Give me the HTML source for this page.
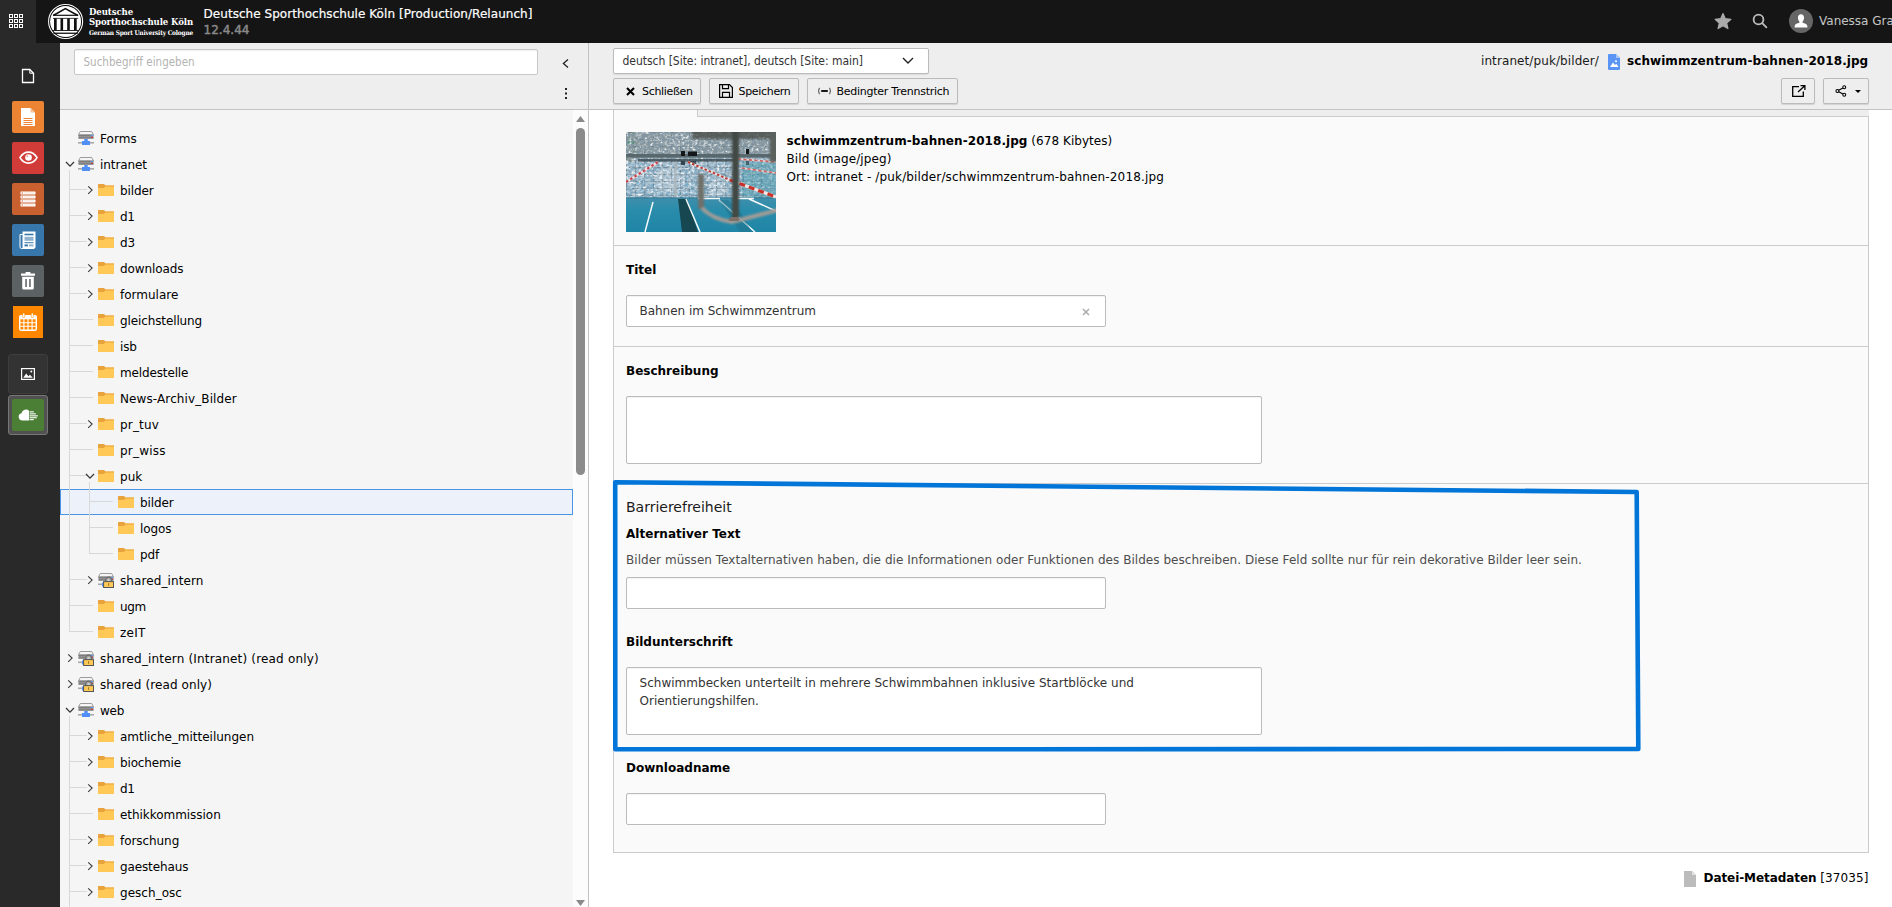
<!DOCTYPE html>
<html lang="de">
<head>
<meta charset="utf-8">
<title>Deutsche Sporthochschule Köln [Production/Relaunch] · TYPO3</title>
<style>
*{box-sizing:border-box;margin:0;padding:0}
html,body{width:1892px;height:907px;overflow:hidden;background:#fff}
body{font-family:"DejaVu Sans","Liberation Sans",sans-serif;font-size:12px;color:#1a1a1a;position:relative}
.abs{position:absolute}
svg{display:block}
/* ---- top bar ---- */
#topbar{position:absolute;left:0;top:0;width:1892px;height:43px;background:#151515;color:#fff}
#topbar .toggle{position:absolute;left:0;top:0;width:36px;height:43px;background:#292929}
#topbar .site{position:absolute;left:203.5px;top:7px;font-size:12px;line-height:14px;white-space:nowrap;color:#fff;-webkit-text-stroke:.2px #fff}
#topbar .ver{position:absolute;left:203.5px;top:22.5px;font-size:12px;line-height:14px;white-space:nowrap;color:#8a8a8a;-webkit-text-stroke:.45px #8a8a8a}
#topbar .logo-t{position:absolute;left:89px;white-space:nowrap;color:#fff;font-family:"DejaVu Serif Condensed","DejaVu Serif","Liberation Serif",serif;font-weight:bold}
#topbar .user{position:absolute;left:1819px;top:14px;font-size:12px;line-height:14px;white-space:nowrap;color:#c6c6c6}
/* ---- module menu ---- */
#modmenu{position:absolute;left:0;top:43px;width:60px;height:864px;background:#292929}
#modmenu .m{position:absolute;left:12px;width:32px;height:32px;border-radius:2px}
#modmenu .box{position:absolute;left:8px;width:40px;height:40px;border-radius:3px;border:1px solid #3d3d3d;background:#333}
/* ---- tree column ---- */
#treecol{position:absolute;left:60px;top:43px;width:528px;height:864px;background:#f5f5f5}
#treebar{position:absolute;left:0;top:0;width:528px;height:66px;background:#eee}
#treebar .search{position:absolute;left:14px;top:6px;width:464px;height:26px;border:1px solid #c8c8c8;border-radius:2px;background:#fff;box-shadow:inset 0 1px 1px rgba(0,0,0,.06);font-family:"DejaVu Sans Condensed","DejaVu Sans","Liberation Sans",sans-serif;font-size:11.5px;line-height:25px;padding-left:8.5px;color:#b3b3b3;white-space:nowrap}
#tree{position:absolute;left:0;top:67px;width:513px;height:797px;overflow:hidden}
.row{position:absolute;left:0;width:513px;height:26px;line-height:26px;font-size:12px;white-space:nowrap;color:#000}
.selbox{position:absolute;left:0;width:513px;height:26px;background:#edf2fa;border:1px solid #4a94e4}
.row .lbl{position:absolute;top:0}
.row svg{position:absolute}
.vl{position:absolute;width:1px;background:#d8d8d8}
.hl{position:absolute;height:1px;background:#d8d8d8}
#tscroll{position:absolute;left:513px;top:67px;width:15px;height:797px;background:#fcfcfc}
/* ---- right doc header ---- */
#split{position:absolute;left:588px;top:43px;width:1px;height:864px;background:#c3c3c3}
#dochead{position:absolute;left:589px;top:43px;width:1303px;height:67px;background:#eee;border-bottom:1px solid #c3c3c3}
.btn{position:absolute;height:26px;border:1px solid #bbb;border-radius:2px;background:#eee;box-shadow:0 1px 1px rgba(0,0,0,.12);font-size:11px;line-height:24px;white-space:nowrap;color:#000}
.btn span{position:absolute;top:.7px}
#langsel{position:absolute;left:24px;top:5px;width:316px;height:26px;border:1px solid #bbb;border-radius:2px;background:#fff;font-family:"DejaVu Sans Condensed","DejaVu Sans","Liberation Sans",sans-serif;font-size:12px;line-height:24px;padding-left:8.5px;color:#333;white-space:nowrap;box-shadow:0 1px 1px rgba(0,0,0,.08)}
#path{position:absolute;top:11px;font-size:12px;line-height:14px;white-space:nowrap;color:#1a1a1a}
/* ---- form ---- */
#content{position:absolute;left:589px;top:110px;width:1303px;height:797px;background:#fff}
#panel{position:absolute;left:24px;top:0;width:1256px;height:743px;background:#fafafa;border:1px solid #ccc;border-top:0}
.sep{position:absolute;left:0;width:1254px;height:1px;background:#ccc}
.lab{position:absolute;left:12px;font-weight:bold;font-size:12px;line-height:14px;white-space:nowrap;color:#000}
.inp{position:absolute;left:12px;border:1px solid #bbb;border-radius:2px;background:#fff;box-shadow:inset 0 1px 1px rgba(0,0,0,.05);font-size:12px;color:#333;white-space:nowrap}
.txt{position:absolute;white-space:nowrap;font-size:12px;line-height:14px}
</style>
</head>
<body>
<div id="topbar">
<div class="toggle"><svg class="abs" style="left:9px;top:14px" width="14" height="14" viewBox="0 0 14 14" fill="none" stroke="#fff" stroke-width="1"><rect x="0.5" y="0.5" width="3" height="3"/><rect x="5.5" y="0.5" width="3" height="3"/><rect x="10.5" y="0.5" width="3" height="3"/><rect x="0.5" y="5.5" width="3" height="3"/><rect x="5.5" y="5.5" width="3" height="3"/><rect x="10.5" y="5.5" width="3" height="3"/><rect x="0.5" y="10.5" width="3" height="3"/><rect x="5.5" y="10.5" width="3" height="3"/><rect x="10.5" y="10.5" width="3" height="3"/></svg></div>
<svg class="abs" style="left:44px;top:0" width="44" height="43" viewBox="44 0 44 43">
<circle cx="65.6" cy="21.5" r="17" fill="#000" stroke="#fff" stroke-width="1.1"/>
<circle cx="65.6" cy="21.5" r="15.5" fill="#fff"/>
<path d="M53.2 15.4 L65.4 8.6 L77.9 15.4" fill="none" stroke="#111" stroke-width="1.7" stroke-linejoin="miter"/>
<rect x="53" y="14.7" width="25.2" height="1.2" fill="#111"/>
<rect x="53" y="17.9" width="25.2" height=".8" fill="#111"/>
<rect x="54" y="18.3" width="2.7" height="12.2" fill="#111"/>
<rect x="60.5" y="18.3" width="2.6" height="12.2" fill="#111"/>
<rect x="67.2" y="18.3" width="2.6" height="12.2" fill="#111"/>
<rect x="74" y="18.3" width="2.7" height="12.2" fill="#111"/>
<rect x="52.6" y="30.1" width="26" height=".9" fill="#111"/>
<rect x="53.4" y="32.6" width="24.4" height="1.3" fill="#111"/>
</svg>
<div class="logo-t" style="top:6.4px;font-size:9.5px;line-height:12px;letter-spacing:-0.086px">Deutsche</div>
<div class="logo-t" style="top:16.2px;font-size:9.5px;line-height:12px;letter-spacing:-0.107px">Sporthochschule Köln</div>
<div class="logo-t" style="top:28.6px;font-size:6.5px;line-height:9px;letter-spacing:-0.202px">German Sport University Cologne</div>
<div class="site" style="letter-spacing:0.05px">Deutsche Sporthochschule Köln [Production/Relaunch]</div>
<div class="ver" style="letter-spacing:0.027px">12.4.44</div>
<svg class="abs" style="left:1713px;top:11px" width="20" height="20" viewBox="0 0 20 20"><path d="M10.0 2.6L12.3 7.7L17.9 8.3L13.7 12.1L14.9 17.6L10.0 14.8L5.1 17.6L6.3 12.1L2.1 8.3L7.7 7.7Z" fill="#aaa" stroke="#aaa" stroke-width="1.2" stroke-linejoin="round"/></svg><svg class="abs" style="left:1752px;top:13px" width="16" height="16" viewBox="0 0 16 16" fill="none" stroke="#bdbdbd" stroke-width="1.8"><circle cx="6.5" cy="6.5" r="4.9"/><path d="M10.2 10.2 L14.4 14.4" stroke-linecap="round"/></svg><svg class="abs" style="left:1789px;top:9px" width="24" height="24" viewBox="0 0 24 24"><circle cx="12" cy="12" r="12" fill="#666"/>
<path d="M12 5.2c1.9 0 3.1 1.5 3.1 3.6 0 1.5-.6 2.9-1.5 3.7v1.3c2.3.5 4.2 1.3 4.6 2.6l.3 2.2H5.5l.3-2.2c.4-1.3 2.3-2.1 4.6-2.6v-1.3c-.9-.8-1.5-2.2-1.5-3.7 0-2.1 1.2-3.6 3.1-3.6z" fill="#fff"/></svg>
<div class="user">Vanessa Gra</div>
</div>
<div id="modmenu"><svg class="abs" style="left:21px;top:25px" width="14" height="16" viewBox="0 0 14 16"><path d="M1.5 1.5h7.3l3.7 3.7v9.3h-11z" fill="none" stroke="#fff" stroke-width="1.3"/><path d="M8.8 1.5v3.7h3.7" fill="none" stroke="#fff" stroke-width="1"/></svg><div class="m" style="top:58px;background:#ed8433"><svg class="abs" style="left:8px;top:7px" width="16" height="18" viewBox="0 0 16 18"><path d="M1 0h9.5l4.5 4.5v13.5h-14z" fill="#fff"/><path d="M10.5 0v4.5h4.5z" fill="#f6c199"/><g fill="#ed8433"><rect x="3.5" y="10" width="9" height="1"/><rect x="3.5" y="12" width="9" height="1"/><rect x="3.5" y="14" width="9" height="1"/><rect x="3.5" y="16" width="9" height="1"/></g></svg></div><div class="m" style="top:99px;background:#d13c38"><svg class="abs" style="left:6.5px;top:9.3px" width="19" height="13.3" viewBox="0 0 20 14"><path d="M1 7C3.4 3 6.5 1.2 10 1.2s6.6 1.8 9 5.800c-2.4 4-5.5 5.8-9 5.800s-6.6-1.8-9-5.800z" fill="none" stroke="#fff" stroke-width="1.7"/><circle cx="10" cy="6.8" r="3.5" fill="#fff"/><circle cx="8.7" cy="5.5" r="1.1" fill="#e9a3a1"/></svg></div><div class="m" style="top:140px;background:#c8602f"><svg class="abs" style="left:8px;top:8px" width="16" height="16" viewBox="0 0 16 16"><g fill="#fff"><rect x=".5" y=".5" width="15" height="2.9" rx=".4"/><rect x=".5" y="4.5" width="15" height="2.9" rx=".4"/><rect x=".5" y="8.5" width="15" height="2.9" rx=".4"/><rect x=".5" y="12.5" width="15" height="2.9" rx=".4"/></g><g fill="#c8602f"><rect x="1.7" y="1.4" width="1.2" height="1.1"/><rect x="1.7" y="5.4" width="1.2" height="1.1"/><rect x="1.7" y="9.4" width="1.2" height="1.1"/><rect x="1.7" y="13.4" width="1.2" height="1.1"/><rect x="4" y="1.7" width="10" height=".5" opacity=".35"/><rect x="4" y="5.7" width="10" height=".5" opacity=".35"/><rect x="4" y="9.7" width="10" height=".5" opacity=".35"/><rect x="4" y="13.7" width="10" height=".5" opacity=".35"/></g></svg></div><div class="m" style="top:181px;background:#3877ab"><svg class="abs" style="left:7px;top:7px" width="18" height="18" viewBox="0 0 18 18"><path d="M3.5 .5h13v15.5q0 1.5-1.5 1.5h-11.5z" fill="#fff"/><path d="M3.5 3.5h-2.5v12.5q0 1.5 1.5 1.5h12.5" fill="none" stroke="#fff" stroke-width="1"/><g fill="#3877ab"><rect x="5.5" y="2.7" width="9" height="1.6"/><rect x="5.5" y="5.8" width="9" height="4" opacity=".55"/><rect x="5.5" y="11.2" width="9" height="1"/><rect x="5.5" y="13.4" width="3.4" height="2"/><rect x="10" y="13.4" width="4.5" height="2" opacity=".55"/></g></svg></div><div class="m" style="top:222px;background:#5c6164"><svg class="abs" style="left:9px;top:7px" width="14" height="18" viewBox="0 0 14 18"><path d="M4.6 0h4.8v1.6h4.6v2.2h-14v-2.2h4.6z" fill="#fff"/><path d="M1.2 4.8h11.6v11.2q0 1.5-1.5 1.5h-8.6q-1.5 0-1.5-1.5z" fill="#fff"/><rect x="4.3" y="7" width="1.5" height="8" fill="#5c6164"/><rect x="8.2" y="7" width="1.5" height="8" fill="#5c6164"/></svg></div><div class="m" style="top:263px;left:13px;width:30px;border-radius:0;background:#ff8700"><svg class="abs" style="left:6px;top:7px" width="18" height="18" viewBox="0 0 18 18"><rect x=".7" y="2.7" width="16.6" height="14.6" rx="1.5" fill="none" stroke="#fff" stroke-width="1.4"/><rect x=".7" y="2.7" width="16.6" height="3.6" fill="#fff"/><g stroke="#fff" stroke-width="1.1"><path d="M1 9.7h16M1 13.3h16M4.9 6v11M9 6v11M13.1 6v11"/></g><rect x="3.6" y="0" width="2.2" height="4.5" rx="1" fill="#fff" stroke="#ff8700" stroke-width=".6"/><rect x="12.2" y="0" width="2.2" height="4.5" rx="1" fill="#fff" stroke="#ff8700" stroke-width=".6"/></svg></div><div class="box" style="top:311px"><svg class="abs" style="left:12px;top:13px" width="14" height="12" viewBox="0 0 14 12"><rect x=".6" y=".6" width="12.8" height="10.8" fill="none" stroke="#fff" stroke-width="1.2"/><path d="M2.2 9.8l3-4.2 2.2 2.6 1.5-1.5 2.9 3.1z" fill="#fff"/><circle cx="10.3" cy="3.4" r="1" fill="#fff"/></svg></div><div class="box" style="top:352px;background:#515151;border-color:#767676"><div class="abs" style="left:3px;top:3px;width:32px;height:32px;border-radius:2px;background:#4a7f35"><svg class="abs" style="left:6px;top:9px" width="20" height="13" viewBox="0 0 20 13"><path d="M4 12.4a3.6 3.6 0 0 1-.5-7.100a4.5 4.5 0 0 1 7.7-2.300v9.400z" fill="#fff"/><g fill="#fff"><rect x="11.8" y="3.3" width="4" height="1.1"/><rect x="11.8" y="5.3" width="6" height="1.1"/><rect x="11.8" y="7.3" width="8" height="1.1"/><rect x="11.8" y="9.2" width="7" height="1.1"/><rect x="11.8" y="11.1" width="4" height="1.1"/></g></svg></div></div></div>
<div id="treecol"><div id="treebar"><div class="search" style="letter-spacing:0.017px">Suchbegriff eingeben</div><svg class="abs" style="left:501px;top:15px" width="9" height="11" viewBox="0 0 9 11" fill="none" stroke="#222" stroke-width="1.3"><path d="M7 1.5l-4.6 4 4.6 4"/></svg><svg class="abs" style="left:504px;top:44px" width="4" height="14" viewBox="0 0 4 14" fill="#222"><rect x="1" y="1" width="2" height="2"/><rect x="1" y="5.5" width="2" height="2"/><rect x="1" y="10" width="2" height="2"/></svg><div class="abs" style="left:0;top:66px;width:528px;height:1px;background:#c3c3c3"></div></div><div id="tree"><div class="selbox" style="top:379px"></div><div class="vl" style="left:9px;top:60px;height:462px"></div><div class="vl" style="left:9px;top:606px;height:191px"></div><div class="vl" style="left:29px;top:372px;height:72px"></div><div class="hl" style="left:10px;top:79px;width:17px"></div><div class="hl" style="left:10px;top:105px;width:17px"></div><div class="hl" style="left:10px;top:131px;width:17px"></div><div class="hl" style="left:10px;top:157px;width:17px"></div><div class="hl" style="left:10px;top:183px;width:17px"></div><div class="hl" style="left:10px;top:209px;width:23px"></div><div class="hl" style="left:10px;top:235px;width:23px"></div><div class="hl" style="left:10px;top:261px;width:23px"></div><div class="hl" style="left:10px;top:287px;width:23px"></div><div class="hl" style="left:10px;top:313px;width:17px"></div><div class="hl" style="left:10px;top:339px;width:23px"></div><div class="hl" style="left:10px;top:365px;width:17px"></div><div class="hl" style="left:30px;top:391px;width:23px"></div><div class="hl" style="left:30px;top:417px;width:23px"></div><div class="hl" style="left:30px;top:443px;width:23px"></div><div class="hl" style="left:10px;top:469px;width:17px"></div><div class="hl" style="left:10px;top:495px;width:23px"></div><div class="hl" style="left:10px;top:521px;width:23px"></div><div class="hl" style="left:10px;top:625px;width:17px"></div><div class="hl" style="left:10px;top:651px;width:17px"></div><div class="hl" style="left:10px;top:677px;width:17px"></div><div class="hl" style="left:10px;top:703px;width:23px"></div><div class="hl" style="left:10px;top:729px;width:17px"></div><div class="hl" style="left:10px;top:755px;width:17px"></div><div class="hl" style="left:10px;top:781px;width:17px"></div><div class="row" style="top:16px"><svg style="left:18px;top:4px" width="16" height="16" viewBox="0 0 16 16"><path d="M2.3 1.5h11.4l1.8 3.3h-15z" fill="#f5f5f5" stroke="#9a9a9a" stroke-width="1"/><rect x=".5" y="4.5" width="15" height="4.5" fill="#9b9b9b"/><rect x=".5" y="5.3" width="15" height=".9" fill="#6f6f6f"/><rect x=".5" y="7.3" width="15" height=".9" fill="#777"/><rect x="12.7" y="5" width="2.2" height="1" fill="#59a0ff"/><rect x="13.2" y="6.7" width="1.7" height="1.1" fill="#e02b2b"/><rect x="0" y="12" width="16" height="1.6" fill="#a9a9a9"/><rect x="6.3" y="9" width="3.4" height="3" fill="#4f8ff7"/><rect x="4" y="11" width="8" height="4" fill="#4f8ff7"/></svg><span class="lbl" style="left:40px;letter-spacing:0.043px">Forms</span></div><div class="row" style="top:42px"><svg style="left:5px;top:9px" width="10" height="7" viewBox="0 0 10 7" fill="none" stroke="#333" stroke-width="1.2"><path d="M1 1l4 4.2 4-4.2"/></svg><svg style="left:18px;top:4px" width="16" height="16" viewBox="0 0 16 16"><path d="M2.3 1.5h11.4l1.8 3.3h-15z" fill="#f5f5f5" stroke="#9a9a9a" stroke-width="1"/><rect x=".5" y="4.5" width="15" height="4.5" fill="#9b9b9b"/><rect x=".5" y="5.3" width="15" height=".9" fill="#6f6f6f"/><rect x=".5" y="7.3" width="15" height=".9" fill="#777"/><rect x="12.7" y="5" width="2.2" height="1" fill="#59a0ff"/><rect x="13.2" y="6.7" width="1.7" height="1.1" fill="#e02b2b"/><rect x="0" y="12" width="16" height="1.6" fill="#a9a9a9"/><rect x="6.3" y="9" width="3.4" height="3" fill="#4f8ff7"/><rect x="4" y="11" width="8" height="4" fill="#4f8ff7"/></svg><span class="lbl" style="left:40px;letter-spacing:-0.078px">intranet</span></div><div class="row" style="top:68px"><svg style="left:27px;top:7px" width="7" height="10" viewBox="0 0 7 10" fill="none" stroke="#3a3a3a" stroke-width="1.1"><path d="M1.2 1.3l3.9 3.8-3.9 3.8"/></svg><svg style="left:38px;top:4px" width="16" height="16" viewBox="0 0 16 16"><path d="M0 3.5h16v10.5h-16z" fill="#ffc857"/><path d="M0 2.6q0-.6.6-.6h5.4q.5 0 .7.5l.4 1h8.9v.9h-8.3q-.5 0-.8.4l-.5.7q-.3.4-.8.4h-5.6z" fill="#e8a33d"/></svg><span class="lbl" style="left:60px;letter-spacing:-0.103px">bilder</span></div><div class="row" style="top:94px"><svg style="left:27px;top:7px" width="7" height="10" viewBox="0 0 7 10" fill="none" stroke="#3a3a3a" stroke-width="1.1"><path d="M1.2 1.3l3.9 3.8-3.9 3.8"/></svg><svg style="left:38px;top:4px" width="16" height="16" viewBox="0 0 16 16"><path d="M0 3.5h16v10.5h-16z" fill="#ffc857"/><path d="M0 2.6q0-.6.6-.6h5.4q.5 0 .7.5l.4 1h8.9v.9h-8.3q-.5 0-.8.4l-.5.7q-.3.4-.8.4h-5.6z" fill="#e8a33d"/></svg><span class="lbl" style="left:60px;letter-spacing:-0.333px">d1</span></div><div class="row" style="top:120px"><svg style="left:27px;top:7px" width="7" height="10" viewBox="0 0 7 10" fill="none" stroke="#3a3a3a" stroke-width="1.1"><path d="M1.2 1.3l3.9 3.8-3.9 3.8"/></svg><svg style="left:38px;top:4px" width="16" height="16" viewBox="0 0 16 16"><path d="M0 3.5h16v10.5h-16z" fill="#ffc857"/><path d="M0 2.6q0-.6.6-.6h5.4q.5 0 .7.5l.4 1h8.9v.9h-8.3q-.5 0-.8.4l-.5.7q-.3.4-.8.4h-5.6z" fill="#e8a33d"/></svg><span class="lbl" style="left:60px;letter-spacing:-0.233px">d3</span></div><div class="row" style="top:146px"><svg style="left:27px;top:7px" width="7" height="10" viewBox="0 0 7 10" fill="none" stroke="#3a3a3a" stroke-width="1.1"><path d="M1.2 1.3l3.9 3.8-3.9 3.8"/></svg><svg style="left:38px;top:4px" width="16" height="16" viewBox="0 0 16 16"><path d="M0 3.5h16v10.5h-16z" fill="#ffc857"/><path d="M0 2.6q0-.6.6-.6h5.4q.5 0 .7.5l.4 1h8.9v.9h-8.3q-.5 0-.8.4l-.5.7q-.3.4-.8.4h-5.6z" fill="#e8a33d"/></svg><span class="lbl" style="left:60px;letter-spacing:-0.087px">downloads</span></div><div class="row" style="top:172px"><svg style="left:27px;top:7px" width="7" height="10" viewBox="0 0 7 10" fill="none" stroke="#3a3a3a" stroke-width="1.1"><path d="M1.2 1.3l3.9 3.8-3.9 3.8"/></svg><svg style="left:38px;top:4px" width="16" height="16" viewBox="0 0 16 16"><path d="M0 3.5h16v10.5h-16z" fill="#ffc857"/><path d="M0 2.6q0-.6.6-.6h5.4q.5 0 .7.5l.4 1h8.9v.9h-8.3q-.5 0-.8.4l-.5.7q-.3.4-.8.4h-5.6z" fill="#e8a33d"/></svg><span class="lbl" style="left:60px;letter-spacing:-0.003px">formulare</span></div><div class="row" style="top:198px"><svg style="left:38px;top:4px" width="16" height="16" viewBox="0 0 16 16"><path d="M0 3.5h16v10.5h-16z" fill="#ffc857"/><path d="M0 2.6q0-.6.6-.6h5.4q.5 0 .7.5l.4 1h8.9v.9h-8.3q-.5 0-.8.4l-.5.7q-.3.4-.8.4h-5.6z" fill="#e8a33d"/></svg><span class="lbl" style="left:60px;letter-spacing:-0.116px">gleichstellung</span></div><div class="row" style="top:224px"><svg style="left:38px;top:4px" width="16" height="16" viewBox="0 0 16 16"><path d="M0 3.5h16v10.5h-16z" fill="#ffc857"/><path d="M0 2.6q0-.6.6-.6h5.4q.5 0 .7.5l.4 1h8.9v.9h-8.3q-.5 0-.8.4l-.5.7q-.3.4-.8.4h-5.6z" fill="#e8a33d"/></svg><span class="lbl" style="left:60px;letter-spacing:-0.168px">isb</span></div><div class="row" style="top:250px"><svg style="left:38px;top:4px" width="16" height="16" viewBox="0 0 16 16"><path d="M0 3.5h16v10.5h-16z" fill="#ffc857"/><path d="M0 2.6q0-.6.6-.6h5.4q.5 0 .7.5l.4 1h8.9v.9h-8.3q-.5 0-.8.4l-.5.7q-.3.4-.8.4h-5.6z" fill="#e8a33d"/></svg><span class="lbl" style="left:60px;letter-spacing:-0.136px">meldestelle</span></div><div class="row" style="top:276px"><svg style="left:38px;top:4px" width="16" height="16" viewBox="0 0 16 16"><path d="M0 3.5h16v10.5h-16z" fill="#ffc857"/><path d="M0 2.6q0-.6.6-.6h5.4q.5 0 .7.5l.4 1h8.9v.9h-8.3q-.5 0-.8.4l-.5.7q-.3.4-.8.4h-5.6z" fill="#e8a33d"/></svg><span class="lbl" style="left:60px;letter-spacing:0.109px">News-Archiv_Bilder</span></div><div class="row" style="top:302px"><svg style="left:27px;top:7px" width="7" height="10" viewBox="0 0 7 10" fill="none" stroke="#3a3a3a" stroke-width="1.1"><path d="M1.2 1.3l3.9 3.8-3.9 3.8"/></svg><svg style="left:38px;top:4px" width="16" height="16" viewBox="0 0 16 16"><path d="M0 3.5h16v10.5h-16z" fill="#ffc857"/><path d="M0 2.6q0-.6.6-.6h5.4q.5 0 .7.5l.4 1h8.9v.9h-8.3q-.5 0-.8.4l-.5.7q-.3.4-.8.4h-5.6z" fill="#e8a33d"/></svg><span class="lbl" style="left:60px;letter-spacing:0.189px">pr_tuv</span></div><div class="row" style="top:328px"><svg style="left:38px;top:4px" width="16" height="16" viewBox="0 0 16 16"><path d="M0 3.5h16v10.5h-16z" fill="#ffc857"/><path d="M0 2.6q0-.6.6-.6h5.4q.5 0 .7.5l.4 1h8.9v.9h-8.3q-.5 0-.8.4l-.5.7q-.3.4-.8.4h-5.6z" fill="#e8a33d"/></svg><span class="lbl" style="left:60px;letter-spacing:0.214px">pr_wiss</span></div><div class="row" style="top:354px"><svg style="left:25px;top:9px" width="10" height="7" viewBox="0 0 10 7" fill="none" stroke="#333" stroke-width="1.2"><path d="M1 1l4 4.2 4-4.2"/></svg><svg style="left:38px;top:4px" width="16" height="16" viewBox="0 0 16 16"><path d="M0 3.5h16v10.5h-16z" fill="#ffc857"/><path d="M0 2.6q0-.6.6-.6h5.4q.5 0 .7.5l.4 1h8.9v.9h-8.3q-.5 0-.8.4l-.5.7q-.3.4-.8.4h-5.6z" fill="#e8a33d"/></svg><span class="lbl" style="left:60px;letter-spacing:0.009px">puk</span></div><div class="row" style="top:380px"><svg style="left:58px;top:4px" width="16" height="16" viewBox="0 0 16 16"><path d="M0 3.5h16v10.5h-16z" fill="#ffc857"/><path d="M0 2.6q0-.6.6-.6h5.4q.5 0 .7.5l.4 1h8.9v.9h-8.3q-.5 0-.8.4l-.5.7q-.3.4-.8.4h-5.6z" fill="#e8a33d"/></svg><span class="lbl" style="left:80px;letter-spacing:-0.103px">bilder</span></div><div class="row" style="top:406px"><svg style="left:58px;top:4px" width="16" height="16" viewBox="0 0 16 16"><path d="M0 3.5h16v10.5h-16z" fill="#ffc857"/><path d="M0 2.6q0-.6.6-.6h5.4q.5 0 .7.5l.4 1h8.9v.9h-8.3q-.5 0-.8.4l-.5.7q-.3.4-.8.4h-5.6z" fill="#e8a33d"/></svg><span class="lbl" style="left:80px;letter-spacing:-0.098px">logos</span></div><div class="row" style="top:432px"><svg style="left:58px;top:4px" width="16" height="16" viewBox="0 0 16 16"><path d="M0 3.5h16v10.5h-16z" fill="#ffc857"/><path d="M0 2.6q0-.6.6-.6h5.4q.5 0 .7.5l.4 1h8.9v.9h-8.3q-.5 0-.8.4l-.5.7q-.3.4-.8.4h-5.6z" fill="#e8a33d"/></svg><span class="lbl" style="left:80px;letter-spacing:-0.123px">pdf</span></div><div class="row" style="top:458px"><svg style="left:27px;top:7px" width="7" height="10" viewBox="0 0 7 10" fill="none" stroke="#3a3a3a" stroke-width="1.1"><path d="M1.2 1.3l3.9 3.8-3.9 3.8"/></svg><svg style="left:38px;top:4px" width="16" height="16" viewBox="0 0 16 16"><path d="M2.3 1.5h11.4l1.8 3.3h-15z" fill="#f5f5f5" stroke="#9a9a9a" stroke-width="1"/><rect x=".5" y="4.5" width="15" height="4.5" fill="#9b9b9b"/><rect x=".5" y="5.3" width="15" height=".9" fill="#6f6f6f"/><rect x=".5" y="7.3" width="15" height=".9" fill="#777"/><rect x="12.7" y="5" width="2.2" height="1" fill="#59a0ff"/><rect x="13.2" y="6.7" width="1.7" height="1.1" fill="#e02b2b"/><rect x="0" y="11.5" width="5" height="1.6" fill="#a9a9a9"/><rect x="4" y="10.5" width="2" height="4" fill="#4f8ff7"/><path d="M7.6 9.6v-1.4a3 3 0 0 1 6 0v1.4z" fill="#a3a3a3" stroke="#6e6e6e" stroke-width="1.2"/><path d="M9.3 9.3v-.9a1.3 1.3 0 0 1 2.6 0v.9z" fill="#cfcfcf"/><rect x="5.6" y="9.6" width="9.9" height="5.9" fill="#ffc857" stroke="#555" stroke-width="1"/><rect x="10.1" y="11.2" width="1" height="2.7" fill="#9a7420"/></svg><span class="lbl" style="left:60px;letter-spacing:0.096px">shared_intern</span></div><div class="row" style="top:484px"><svg style="left:38px;top:4px" width="16" height="16" viewBox="0 0 16 16"><path d="M0 3.5h16v10.5h-16z" fill="#ffc857"/><path d="M0 2.6q0-.6.6-.6h5.4q.5 0 .7.5l.4 1h8.9v.9h-8.3q-.5 0-.8.4l-.5.7q-.3.4-.8.4h-5.6z" fill="#e8a33d"/></svg><span class="lbl" style="left:60px;letter-spacing:-0.341px">ugm</span></div><div class="row" style="top:510px"><svg style="left:38px;top:4px" width="16" height="16" viewBox="0 0 16 16"><path d="M0 3.5h16v10.5h-16z" fill="#ffc857"/><path d="M0 2.6q0-.6.6-.6h5.4q.5 0 .7.5l.4 1h8.9v.9h-8.3q-.5 0-.8.4l-.5.7q-.3.4-.8.4h-5.6z" fill="#e8a33d"/></svg><span class="lbl" style="left:60px;letter-spacing:0.259px">zeIT</span></div><div class="row" style="top:536px"><svg style="left:7px;top:7px" width="7" height="10" viewBox="0 0 7 10" fill="none" stroke="#3a3a3a" stroke-width="1.1"><path d="M1.2 1.3l3.9 3.8-3.9 3.8"/></svg><svg style="left:18px;top:4px" width="16" height="16" viewBox="0 0 16 16"><path d="M2.3 1.5h11.4l1.8 3.3h-15z" fill="#f5f5f5" stroke="#9a9a9a" stroke-width="1"/><rect x=".5" y="4.5" width="15" height="4.5" fill="#9b9b9b"/><rect x=".5" y="5.3" width="15" height=".9" fill="#6f6f6f"/><rect x=".5" y="7.3" width="15" height=".9" fill="#777"/><rect x="12.7" y="5" width="2.2" height="1" fill="#59a0ff"/><rect x="13.2" y="6.7" width="1.7" height="1.1" fill="#e02b2b"/><rect x="0" y="11.5" width="5" height="1.6" fill="#a9a9a9"/><rect x="4" y="10.5" width="2" height="4" fill="#4f8ff7"/><path d="M7.6 9.6v-1.4a3 3 0 0 1 6 0v1.4z" fill="#a3a3a3" stroke="#6e6e6e" stroke-width="1.2"/><path d="M9.3 9.3v-.9a1.3 1.3 0 0 1 2.6 0v.9z" fill="#cfcfcf"/><rect x="5.6" y="9.6" width="9.9" height="5.9" fill="#ffc857" stroke="#555" stroke-width="1"/><rect x="10.1" y="11.2" width="1" height="2.7" fill="#9a7420"/></svg><span class="lbl" style="left:40px;letter-spacing:0.171px">shared_intern (Intranet) (read only)</span></div><div class="row" style="top:562px"><svg style="left:7px;top:7px" width="7" height="10" viewBox="0 0 7 10" fill="none" stroke="#3a3a3a" stroke-width="1.1"><path d="M1.2 1.3l3.9 3.8-3.9 3.8"/></svg><svg style="left:18px;top:4px" width="16" height="16" viewBox="0 0 16 16"><path d="M2.3 1.5h11.4l1.8 3.3h-15z" fill="#f5f5f5" stroke="#9a9a9a" stroke-width="1"/><rect x=".5" y="4.5" width="15" height="4.5" fill="#9b9b9b"/><rect x=".5" y="5.3" width="15" height=".9" fill="#6f6f6f"/><rect x=".5" y="7.3" width="15" height=".9" fill="#777"/><rect x="12.7" y="5" width="2.2" height="1" fill="#59a0ff"/><rect x="13.2" y="6.7" width="1.7" height="1.1" fill="#e02b2b"/><rect x="0" y="11.5" width="5" height="1.6" fill="#a9a9a9"/><rect x="4" y="10.5" width="2" height="4" fill="#4f8ff7"/><path d="M7.6 9.6v-1.4a3 3 0 0 1 6 0v1.4z" fill="#a3a3a3" stroke="#6e6e6e" stroke-width="1.2"/><path d="M9.3 9.3v-.9a1.3 1.3 0 0 1 2.6 0v.9z" fill="#cfcfcf"/><rect x="5.6" y="9.6" width="9.9" height="5.9" fill="#ffc857" stroke="#555" stroke-width="1"/><rect x="10.1" y="11.2" width="1" height="2.7" fill="#9a7420"/></svg><span class="lbl" style="left:40px;letter-spacing:0.101px">shared (read only)</span></div><div class="row" style="top:588px"><svg style="left:5px;top:9px" width="10" height="7" viewBox="0 0 10 7" fill="none" stroke="#333" stroke-width="1.2"><path d="M1 1l4 4.2 4-4.2"/></svg><svg style="left:18px;top:4px" width="16" height="16" viewBox="0 0 16 16"><path d="M2.3 1.5h11.4l1.8 3.3h-15z" fill="#f5f5f5" stroke="#9a9a9a" stroke-width="1"/><rect x=".5" y="4.5" width="15" height="4.5" fill="#9b9b9b"/><rect x=".5" y="5.3" width="15" height=".9" fill="#6f6f6f"/><rect x=".5" y="7.3" width="15" height=".9" fill="#777"/><rect x="12.7" y="5" width="2.2" height="1" fill="#59a0ff"/><rect x="13.2" y="6.7" width="1.7" height="1.1" fill="#e02b2b"/><rect x="0" y="12" width="16" height="1.6" fill="#a9a9a9"/><rect x="6.3" y="9" width="3.4" height="3" fill="#4f8ff7"/><rect x="4" y="11" width="8" height="4" fill="#4f8ff7"/></svg><span class="lbl" style="left:40px;letter-spacing:-0.243px">web</span></div><div class="row" style="top:614px"><svg style="left:27px;top:7px" width="7" height="10" viewBox="0 0 7 10" fill="none" stroke="#3a3a3a" stroke-width="1.1"><path d="M1.2 1.3l3.9 3.8-3.9 3.8"/></svg><svg style="left:38px;top:4px" width="16" height="16" viewBox="0 0 16 16"><path d="M0 3.5h16v10.5h-16z" fill="#ffc857"/><path d="M0 2.6q0-.6.6-.6h5.4q.5 0 .7.5l.4 1h8.9v.9h-8.3q-.5 0-.8.4l-.5.7q-.3.4-.8.4h-5.6z" fill="#e8a33d"/></svg><span class="lbl" style="left:60px;letter-spacing:-0.015px">amtliche_mitteilungen</span></div><div class="row" style="top:640px"><svg style="left:27px;top:7px" width="7" height="10" viewBox="0 0 7 10" fill="none" stroke="#3a3a3a" stroke-width="1.1"><path d="M1.2 1.3l3.9 3.8-3.9 3.8"/></svg><svg style="left:38px;top:4px" width="16" height="16" viewBox="0 0 16 16"><path d="M0 3.5h16v10.5h-16z" fill="#ffc857"/><path d="M0 2.6q0-.6.6-.6h5.4q.5 0 .7.5l.4 1h8.9v.9h-8.3q-.5 0-.8.4l-.5.7q-.3.4-.8.4h-5.6z" fill="#e8a33d"/></svg><span class="lbl" style="left:60px;letter-spacing:-0.155px">biochemie</span></div><div class="row" style="top:666px"><svg style="left:27px;top:7px" width="7" height="10" viewBox="0 0 7 10" fill="none" stroke="#3a3a3a" stroke-width="1.1"><path d="M1.2 1.3l3.9 3.8-3.9 3.8"/></svg><svg style="left:38px;top:4px" width="16" height="16" viewBox="0 0 16 16"><path d="M0 3.5h16v10.5h-16z" fill="#ffc857"/><path d="M0 2.6q0-.6.6-.6h5.4q.5 0 .7.5l.4 1h8.9v.9h-8.3q-.5 0-.8.4l-.5.7q-.3.4-.8.4h-5.6z" fill="#e8a33d"/></svg><span class="lbl" style="left:60px;letter-spacing:-0.333px">d1</span></div><div class="row" style="top:692px"><svg style="left:38px;top:4px" width="16" height="16" viewBox="0 0 16 16"><path d="M0 3.5h16v10.5h-16z" fill="#ffc857"/><path d="M0 2.6q0-.6.6-.6h5.4q.5 0 .7.5l.4 1h8.9v.9h-8.3q-.5 0-.8.4l-.5.7q-.3.4-.8.4h-5.6z" fill="#e8a33d"/></svg><span class="lbl" style="left:60px;letter-spacing:-0.043px">ethikkommission</span></div><div class="row" style="top:718px"><svg style="left:27px;top:7px" width="7" height="10" viewBox="0 0 7 10" fill="none" stroke="#3a3a3a" stroke-width="1.1"><path d="M1.2 1.3l3.9 3.8-3.9 3.8"/></svg><svg style="left:38px;top:4px" width="16" height="16" viewBox="0 0 16 16"><path d="M0 3.5h16v10.5h-16z" fill="#ffc857"/><path d="M0 2.6q0-.6.6-.6h5.4q.5 0 .7.5l.4 1h8.9v.9h-8.3q-.5 0-.8.4l-.5.7q-.3.4-.8.4h-5.6z" fill="#e8a33d"/></svg><span class="lbl" style="left:60px;letter-spacing:-0.066px">forschung</span></div><div class="row" style="top:744px"><svg style="left:27px;top:7px" width="7" height="10" viewBox="0 0 7 10" fill="none" stroke="#3a3a3a" stroke-width="1.1"><path d="M1.2 1.3l3.9 3.8-3.9 3.8"/></svg><svg style="left:38px;top:4px" width="16" height="16" viewBox="0 0 16 16"><path d="M0 3.5h16v10.5h-16z" fill="#ffc857"/><path d="M0 2.6q0-.6.6-.6h5.4q.5 0 .7.5l.4 1h8.9v.9h-8.3q-.5 0-.8.4l-.5.7q-.3.4-.8.4h-5.6z" fill="#e8a33d"/></svg><span class="lbl" style="left:60px;letter-spacing:-0.122px">gaestehaus</span></div><div class="row" style="top:770px"><svg style="left:27px;top:7px" width="7" height="10" viewBox="0 0 7 10" fill="none" stroke="#3a3a3a" stroke-width="1.1"><path d="M1.2 1.3l3.9 3.8-3.9 3.8"/></svg><svg style="left:38px;top:4px" width="16" height="16" viewBox="0 0 16 16"><path d="M0 3.5h16v10.5h-16z" fill="#ffc857"/><path d="M0 2.6q0-.6.6-.6h5.4q.5 0 .7.5l.4 1h8.9v.9h-8.3q-.5 0-.8.4l-.5.7q-.3.4-.8.4h-5.6z" fill="#e8a33d"/></svg><span class="lbl" style="left:60px;letter-spacing:0.038px">gesch_osc</span></div></div><div id="tscroll"><svg class="abs" style="left:3px;top:6px" width="9" height="6" viewBox="0 0 9 6"><path d="M0 6l4.5-6 4.5 6z" fill="#8a8a8a"/></svg><div class="abs" style="left:3px;top:18px;width:9px;height:347px;border-radius:4.5px;background:#8b8b8b"></div><svg class="abs" style="left:3px;top:790px" width="9" height="6" viewBox="0 0 9 6"><path d="M0 0l4.5 6 4.5-6z" fill="#8a8a8a"/></svg></div></div>
<div id="split"></div>
<div id="dochead"><div id="langsel" style="letter-spacing:-0.031px">deutsch [Site: intranet], deutsch [Site: main]<svg class="abs" style="left:288px;top:8px" width="12" height="8" viewBox="0 0 12 8" fill="none" stroke="#222" stroke-width="1.4"><path d="M1 1l5 5 5-5"/></svg></div><div class="btn" style="left:24px;top:35px;width:88px"><svg class="abs" style="left:12px;top:8px" width="9" height="9" viewBox="0 0 9 9" stroke="#000" stroke-width="2.1" fill="none"><path d="M1 1l7 7M8 1l-7 7"/></svg><span style="left:28px;letter-spacing:-0.318px">Schließen</span></div><div class="btn" style="left:120px;top:35px;width:90px"><svg class="abs" style="left:9px;top:5px" width="14" height="14" viewBox="0 0 14 14" fill="none" stroke="#000" stroke-width="1.2"><path d="M.6.6h9.9l2.9 2.9v9.9h-12.8z"/><path d="M3.5.6v4h6v-4" /><path d="M3.5 13.4v-5h7v5"/><path d="M3.5.6h3.4v2.8h1.5v-2.8h1.1v4h-6z" fill="#0" stroke="none"/></svg><span style="left:28.5px;letter-spacing:-0.321px">Speichern</span></div><div class="btn" style="left:218px;top:35px;width:151px"><svg class="abs" style="left:9px;top:7px" width="15" height="10" viewBox="0 0 15 10" fill="none" stroke="#333"><path d="M2.4 1.8q-1.6 3.2 0 6.4M12.6 1.8q1.6 3.2 0 6.4" stroke-width=".9"/><path d="M4.2 5h6.6" stroke="#000" stroke-width="1.8"/></svg><span style="left:28.5px;letter-spacing:-0.255px">Bedingter Trennstrich</span></div><div id="path" style="left:892px;letter-spacing:0.092px">intranet/puk/bilder/</div><svg class="abs" style="left:1019px;top:11px" width="12" height="16" viewBox="0 0 12 16"><path d="M0 1q0-1 1-1h7l4 4v11q0 1-1 1h-10q-1 0-1-1z" fill="#5a95f5"/><path d="M8 0l4 4h-4z" fill="#a9c7fa"/><path d="M2 13l3-4.5 2 2.5 1.3-1.3 2.2 3.3z" fill="#fff"/><circle cx="8" cy="7.3" r="1" fill="#fff"/></svg><div id="path" style="left:1038px;font-weight:bold;color:#000;letter-spacing:0.075px">schwimmzentrum-bahnen-2018.jpg</div><div class="btn" style="left:1192px;top:35px;width:34px"><svg class="abs" style="left:10px;top:6px" width="14" height="12" viewBox="0 0 14 12" fill="none" stroke="#000" stroke-width="1.3"><path d="M7 1.7h-6.3v9.6h10.6v-4.8"/><path d="M6 7l6.8-6.3M8.5.7h4.4v4.2"/></svg></div><div class="btn" style="left:1234px;top:35px;width:46px"><svg class="abs" style="left:10.5px;top:6px" width="12" height="12" viewBox="0 0 14 14" fill="none" stroke="#000" stroke-width="1.25"><circle cx="10.8" cy="2.6" r="1.7"/><circle cx="2.8" cy="7" r="1.7"/><circle cx="10.8" cy="11.4" r="1.7"/><path d="M4.3 6.2l5-2.8M4.3 7.8l5 2.8"/></svg><svg class="abs" style="left:30.5px;top:10.5px" width="6" height="3" viewBox="0 0 6 3"><path d="M0 0h6l-3 3z" fill="#000"/></svg></div></div>
<div id="content"><div id="panel"><div class="abs" style="left:83px;top:0;width:1172px;height:7px;background:#eee;border-left:1px solid #ccc;border-bottom:1px solid #ccc"></div><svg class="abs" style="left:12px;top:22px" width="150" height="100" viewBox="0 0 150 100">
<defs>
<filter id="nz" x="0" y="0" width="100%" height="100%"><feTurbulence type="fractalNoise" baseFrequency=".32 .42" numOctaves="2" seed="11"/><feColorMatrix type="matrix" values="0 0 0 0 .9  0 0 0 0 .95  0 0 0 0 .98  2.2 1.4 0 0 -1.45"/><feComposite in2="SourceGraphic" operator="in"/></filter>
<filter id="nd" x="0" y="0" width="100%" height="100%"><feTurbulence type="fractalNoise" baseFrequency=".36 .4" numOctaves="2" seed="3"/><feColorMatrix type="matrix" values="0 0 0 0 .22  0 0 0 0 .3  0 0 0 0 .36  0 2.4 1.4 0 -1.3"/><feComposite in2="SourceGraphic" operator="in"/></filter>
<filter id="b1" x="-20%" y="-20%" width="140%" height="140%"><feGaussianBlur stdDeviation="1.3"/></filter>
<filter id="b2" x="-20%" y="-20%" width="140%" height="140%"><feGaussianBlur stdDeviation=".6"/></filter>
<pattern id="grid" width="9" height="7" patternUnits="userSpaceOnUse"><path d="M0 .5h9M.5 0v7" stroke="#4d646f" stroke-width="1" opacity=".6"/></pattern>
<linearGradient id="wat" x1="0" y1="0" x2="0" y2="1"><stop offset="0" stop-color="#3f8fac"/><stop offset=".35" stop-color="#2a8cab"/><stop offset="1" stop-color="#1f85a6"/></linearGradient>
<linearGradient id="mid" x1="0" y1="0" x2="0" y2="1"><stop offset="0" stop-color="#7d929b"/><stop offset=".42" stop-color="#8fb6d0"/><stop offset="1" stop-color="#79b3d3"/></linearGradient>
</defs>
<rect width="150" height="68" fill="url(#mid)"/>
<rect width="150" height="22" fill="#8a9594"/><ellipse cx="42" cy="48" rx="14" ry="12" fill="#dfeaf2" opacity=".55"/><ellipse cx="92" cy="55" rx="9" ry="9" fill="#e6eef4" opacity=".5"/><ellipse cx="60" cy="10" rx="22" ry="8" fill="#c9d2d6" opacity=".5"/>
<rect width="9" height="30" fill="#7f8f7c"/><rect x="1" y="9" width="7" height="3" fill="#2f8a5a"/>
<rect width="150" height="68" fill="url(#grid)"/>
<rect width="150" height="68" fill="#fff" filter="url(#nz)"/>
<rect width="150" height="27" fill="#fff" filter="url(#nd)"/><rect y="27" width="150" height="41" fill="#fff" filter="url(#nd)" opacity=".5"/><rect x="116" y="30" width="34" height="36" fill="#3f96a6" opacity=".42"/><rect x="66" y="-4" width="90" height="11" fill="#4b504c" opacity=".8" filter="url(#b1)"/>
<rect y="22" width="150" height="3.6" fill="#59686d"/>
<rect x="12" y="27" width="98" height="2.6" fill="#3f4d52" opacity=".85"/>
<rect x="48" y="30" width="3" height="36" fill="#a8b4b8" opacity=".7"/>
<rect x="55" y="19" width="4" height="5" fill="#15181a"/><rect x="62" y="19.5" width="9" height="4.5" fill="#15181a"/><rect x="120" y="17" width="3" height="5" fill="#15181a"/>
<rect x="55" y="29" width="4" height="4" fill="#1d2a33" opacity=".8"/><rect x="64" y="29" width="6" height="3" fill="#1d2a33" opacity=".7"/><rect x="120" y="29" width="3" height="4" fill="#1d2a33" opacity=".6"/>
<rect y="66" width="150" height="34" fill="url(#wat)"/>
<rect y="65" width="150" height="1.5" fill="#2e6f86" opacity=".6"/>
<path d="M52 67h9l11 33h-16z" fill="#174851"/>
<g stroke="#fff" stroke-width="1.5" opacity=".95"><path d="M27 70l-8 30M60 67l14 33M93 68l36 32M123 67l27 12M72 66.500h22M110 66.500h18" stroke-linecap="butt"/></g>
<path d="M93 68h9l14 14 10 18h-12z" fill="#1f6f88" opacity=".45"/>
<path d="M0 50l32-20" stroke="#f2dfe0" stroke-width="2.2"/><path d="M0 50l32-20" stroke="#c8434d" stroke-width="2.2" stroke-dasharray="2.5 2.5"/>
<path d="M62 30l42 18" stroke="#f3e4e2" stroke-width="2"/><path d="M62 30l42 18" stroke="#b63a36" stroke-width="2" stroke-dasharray="2.5 2"/>
<path d="M104 48l46 17" stroke="#f3e4e2" stroke-width="3.2"/><path d="M104 48l46 17" stroke="#c7322b" stroke-width="3.2" stroke-dasharray="6 4"/>
<path d="M112 27l38 3M116 36l34 5" stroke="#e9d3d0" stroke-width="1.6"/><path d="M112 27l38 3M116 36l34 5" stroke="#cf5f5f" stroke-width="1.6" stroke-dasharray="3 2.5"/>
<g filter="url(#b1)"><rect x="106" y="-3" width="7" height="91" fill="#434a45"/><rect x="144" y="-3" width="8" height="33" fill="#5a605c"/></g>
<g filter="url(#b1)"><rect x="72" y="42" width="6" height="35" fill="#6f706a"/><path d="M76 76q10 11 30 14l46-12" fill="none" stroke="#a39c95" stroke-width="4"/></g>
<path d="M104 86q4 4 8 0" stroke="#7d6f66" stroke-width="5" fill="none" filter="url(#b2)"/>
</svg><div class="txt" style="left:172.5px;top:24px;color:#000"><b style="letter-spacing:0.065px">schwimmzentrum-bahnen-2018.jpg</b> <span style="letter-spacing:0.05px">(678 Kibytes)</span></div><div class="txt" style="left:172.5px;top:42px;color:#000;letter-spacing:0.113px">Bild (image/jpeg)</div><div class="txt" style="left:172.5px;top:60px;color:#000;letter-spacing:0.145px">Ort: intranet - /puk/bilder/schwimmzentrum-bahnen-2018.jpg</div><div class="sep" style="top:135px"></div><div class="sep" style="top:236px"></div><div class="sep" style="top:373px"></div><div class="lab" style="top:153px">Titel</div><div class="inp" style="top:185px;width:480px;height:32px;line-height:30px;padding-left:12.5px;letter-spacing:-0.026px">Bahnen im Schwimmzentrum<svg class="abs" style="left:455px;top:12px" width="8" height="8" viewBox="0 0 8 8" stroke="#aaa" stroke-width="1.5" fill="none"><path d="M1 1l6 6M7 1l-6 6"/></svg></div><div class="lab" style="top:254px">Beschreibung</div><div class="inp" style="top:286px;width:636px;height:68px"></div><div class="txt" style="left:12px;top:389px;font-size:14px;line-height:16px;color:#1a1a1a;letter-spacing:-0.004px">Barrierefreiheit</div><div class="lab" style="top:417px;letter-spacing:0.032px">Alternativer Text</div><div class="txt" style="left:12px;top:443px;color:#4d4d4d;letter-spacing:0.039px">Bilder müssen Textalternativen haben, die die Informationen oder Funktionen des Bildes beschreiben. Diese Feld sollte nur für rein dekorative Bilder leer sein.</div><div class="inp" style="top:467px;width:480px;height:32px"></div><div class="lab" style="top:525px">Bildunterschrift</div><div class="inp" style="top:557px;width:636px;height:68px;padding:6px 0 0 12.5px;line-height:18px;white-space:normal"><span style="white-space:nowrap;letter-spacing:0.021px">Schwimmbecken unterteilt in mehrere Schwimmbahnen inklusive Startblöcke und</span><br>Orientierungshilfen.</div><div class="lab" style="top:651px">Downloadname</div><div class="inp" style="top:683px;width:480px;height:32px"></div></div><svg class="abs" style="left:0;top:360px" width="1303" height="290" viewBox="589 470 1303 290" fill="none"><path d="M615.2 482.2L1636.7 492L1638.3 749L615.3 749.3Z" stroke="#0275d8" stroke-width="4.6" stroke-linejoin="round"/></svg><svg class="abs" style="left:1095px;top:761px" width="12" height="16" viewBox="0 0 12 16"><path d="M0 0h8l4 4v12h-12z" fill="#bcbcbc"/><path d="M8 0l4 4h-4z" fill="#e2e2e2"/></svg><div class="txt" style="left:1114.5px;top:761px;color:#000"><b style="letter-spacing:-0.07px">Datei-Metadaten</b> <span style="letter-spacing:0.093px">[37035]</span></div></div>
</body>
</html>
